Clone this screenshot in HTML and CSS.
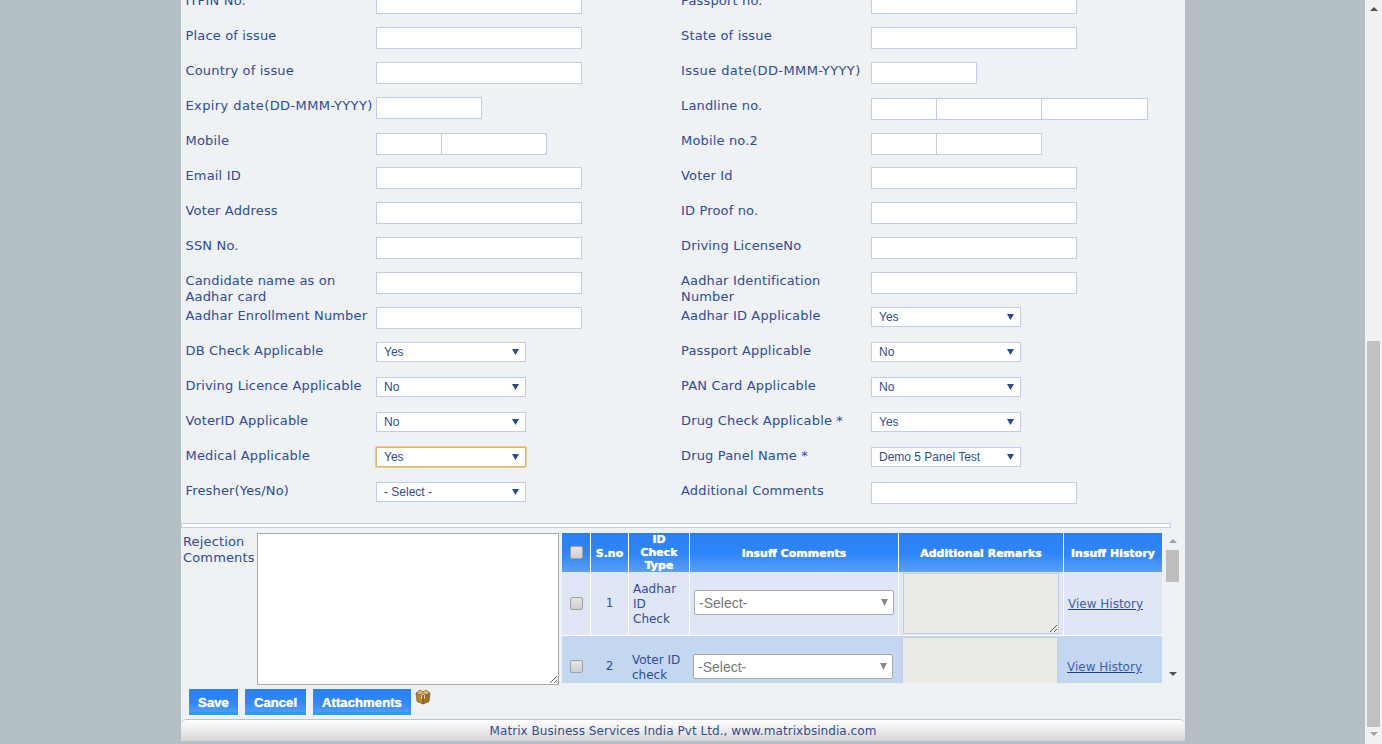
FILE: index.html
```html
<!DOCTYPE html>
<html lang="en">
<head>
  <meta charset="UTF-8">
  <title>Candidate Details</title>
  <link rel="stylesheet" href="styles.css">
</head>
<body>
  <div class="page">
    <div class="wrap">
      <form class="fields">
        <label>ITPIN No.</label><div><input class="txt"></div>
        <label>Passport no.</label><div><input class="txt"></div>

        <label>Place of issue</label><div><input class="txt"></div>
        <label>State of issue</label><div><input class="txt"></div>

        <label>Country of issue</label><div><input class="txt"></div>
        <label class="date-label">Issue date(DD-MMM-YYYY)</label><div><input class="txt date"></div>

        <label class="date-label">Expiry date(DD-MMM-YYYY)</label><div><input class="txt date"></div>
        <label>Landline no.</label>
        <div class="phone"><input class="txt code"><input class="txt num"><input class="txt ext"></div>

        <label>Mobile</label>
        <div class="phone"><input class="txt code"><input class="txt num"></div>
        <label>Mobile no.2</label>
        <div class="phone"><input class="txt code"><input class="txt num"></div>

        <label>Email ID</label><div><input class="txt"></div>
        <label>Voter Id</label><div><input class="txt"></div>

        <label>Voter Address</label><div><input class="txt"></div>
        <label>ID Proof no.</label><div><input class="txt"></div>

        <label>SSN No.</label><div><input class="txt"></div>
        <label>Driving LicenseNo</label><div><input class="txt"></div>

        <label>Candidate name as on Aadhar card</label><div><input class="txt"></div>
        <label>Aadhar Identification Number</label><div><input class="txt"></div>

        <label>Aadhar Enrollment Number</label><div><input class="txt"></div>
        <label>Aadhar ID Applicable</label>
        <div><select class="sel"><option>Yes</option></select></div>

        <label>DB Check Applicable</label>
        <div><select class="sel"><option>Yes</option></select></div>
        <label>Passport Applicable</label>
        <div><select class="sel"><option>No</option></select></div>

        <label>Driving Licence Applicable</label>
        <div><select class="sel"><option>No</option></select></div>
        <label>PAN Card Applicable</label>
        <div><select class="sel"><option>No</option></select></div>

        <label>VoterID Applicable</label>
        <div><select class="sel"><option>No</option></select></div>
        <label>Drug Check Applicable *</label>
        <div><select class="sel"><option>Yes</option></select></div>

        <label>Medical Applicable</label>
        <div><select class="sel focused"><option>Yes</option></select></div>
        <label>Drug Panel Name *</label>
        <div><select class="sel"><option>Demo 5 Panel Test</option></select></div>

        <label>Fresher(Yes/No)</label>
        <div><select class="sel"><option>- Select -</option></select></div>
        <label>Additional Comments</label><div><input class="txt"></div>
      </form>

      <div class="divider"></div>

      <div class="review">
        <label class="reject-label">Rejection Comments</label>
        <textarea class="reject-box"></textarea>

        <div class="grid-clip">
          <table class="grid">
            <colgroup>
              <col class="c-check"><col class="c-sno"><col class="c-type">
              <col class="c-comments"><col class="c-remarks"><col class="c-history">
            </colgroup>
            <thead>
              <tr>
                <th><input type="checkbox"></th>
                <th>S.no</th>
                <th class="th-type">ID Check Type</th>
                <th>Insuff Comments</th>
                <th>Additional Remarks</th>
                <th>Insuff History</th>
              </tr>
            </thead>
            <tbody>
              <tr class="odd">
                <td class="mid"><input type="checkbox"></td>
                <td class="mid">1</td>
                <td class="type">Aadhar ID Check</td>
                <td><select class="insuff"><option>-Select-</option></select></td>
                <td><textarea class="remarks"></textarea></td>
                <td class="link"><a href="#">View History</a></td>
              </tr>
              <tr class="even">
                <td class="mid"><input type="checkbox"></td>
                <td class="mid">2</td>
                <td class="type">Voter ID check</td>
                <td><select class="insuff"><option>-Select-</option></select></td>
                <td><textarea class="remarks"></textarea></td>
                <td class="link"><a href="#">View History</a></td>
              </tr>
            </tbody>
          </table>
        </div>

        <div class="grid-scroll">
          <span class="arrow up small"></span>
          <span class="grid-thumb"></span>
          <span class="arrow down small dark"></span>
        </div>
      </div>

      <div class="actions">
        <button type="button" class="btn btn-save">Save</button>
        <button type="button" class="btn btn-cancel">Cancel</button>
        <button type="button" class="btn btn-attach">Attachments</button>
        <svg class="box" width="16" height="16" viewBox="0 0 16 16">
          <path d="M1 4 L8 6.5 V15 L2 12.5 Z" fill="#b8843c" stroke="#7d5520" stroke-width=".7"/>
          <path d="M15 4 L8 6.5 V15 L14 12.5 Z" fill="#a06f2c" stroke="#7d5520" stroke-width=".7"/>
          <path d="M1 4 L5 1 L8 3 L11 1 L15 4 L11 6 L8 4.5 L5 6 Z" fill="#e0b56e" stroke="#7d5520" stroke-width=".7"/>
          <path d="M6.5 6 V10 M9.5 6 V10" stroke="#ecd09a" stroke-width="1"/>
        </svg>
      </div>

      <footer class="foot">Matrix Business Services India Pvt Ltd., www.matrixbsindia.com</footer>
    </div>
  </div>

  <div class="page-scroll">
    <span class="arrow up"></span>
    <span class="page-thumb"></span>
    <span class="arrow down"></span>
  </div>
</body>
</html>
```

FILE: styles.css
```css
html, body {
  margin: 0;
  padding: 0;
  height: 744px;
  overflow: hidden;
}
body {
  display: flex;
  background: #b3bfc5;
  font-family: "DejaVu Sans", Verdana, sans-serif;
  color: #2f4b9b;
}

.page {
  flex: 1;
  height: 744px;
  overflow: hidden;
}
.wrap {
  width: 1004px;
  margin-left: 181px;
  background: #eef2f5;
  display: flex;
  flex-direction: column;
  height: 741px;
}

/* form fields - page is scrolled, so first row is cut off */
.fields {
  margin: -8px 0 6px;
  padding-left: 4px;
  display: grid;
  grid-template-columns: 191px 304.5px 190.5px 1fr;
  grid-auto-rows: 35px;
  height: 525px;
  flex: none;
  box-sizing: border-box;
}
.fields label {
  font-size: 13px;
  line-height: 16px;
  padding: 1px 0 0 .5px;
  letter-spacing: .16px;
}
.fields label.date-label { letter-spacing: .4px; }
.fields > div {
  display: flex;
  align-items: flex-start;
}
.txt {
  width: 206px;
  height: 22px;
  box-sizing: border-box;
  border: 1px solid #c3cee5;
  background: #fff;
  padding: 0 4px;
  margin: 0;
  outline: none;
  flex: none;
}
.date { width: 106px; }
.phone { padding-top: 1px; }
.code { width: 66px; }
.num { width: 106px; margin-left: -1px; }
.ext { width: 107px; margin-left: -1px; }

.sel {
  appearance: none;
  width: 150px;
  height: 20px;
  box-sizing: border-box;
  border: 1px solid #c3cee5;
  border-radius: 0;
  padding: 0 0 0 7px;
  outline: none;
  font: 12px "Liberation Sans", Arial, sans-serif;
  color: #2f4b9b;
  background: #fff url("data:image/svg+xml,%3Csvg xmlns='http://www.w3.org/2000/svg' width='7' height='6'%3E%3Cpath d='M0 0H7L3.5 6Z' fill='%23264a9a'/%3E%3C/svg%3E") no-repeat right 6px center;
}
.focused {
  border: 1px solid #e3b566;
  box-shadow: 0 0 0 1px #ecc98e;
  border-radius: 1px;
}

.divider {
  width: 990px;
  height: 5px;
  box-sizing: border-box;
  border: 1px solid #c3cee5;
  background: #fff;
  flex: none;
}

/* rejection comments + insuff grid */
.review {
  display: flex;
  align-items: flex-start;
  margin-top: 5px;
  padding-left: 2px;
  height: 152px;
  flex: none;
}
.reject-label {
  width: 74px;
  font-size: 13px;
  line-height: 16px;
  padding-top: 1px;
  letter-spacing: .15px;
  flex: none;
}
.reject-box {
  width: 302px;
  height: 152px;
  box-sizing: border-box;
  border: 1px solid #a9a9a9;
  margin: 0 3px 0 0;
  padding: 2px;
  flex: none;
  background: #fff;
}
.grid-clip {
  width: 600px;
  height: 150px;
  overflow: hidden;
  flex: none;
}
.grid {
  width: 600px;
  table-layout: fixed;
  border-collapse: separate;
  border-spacing: 0;
  font-size: 12px;
  line-height: 15px;
}
.c-check { width: 29px; }
.c-sno { width: 38px; }
.c-type { width: 61px; }
.c-comments { width: 209px; }
.c-remarks { width: 165px; }
.c-history { width: 98px; }

.grid th {
  height: 39px;
  box-sizing: border-box;
  padding: 1px 1px 0;
  background: linear-gradient(#2a80f6, #2f86f6 55%, #5ba0f8);
  color: #fff;
  font-size: 11px;
  line-height: 13px;
  font-weight: bold;
  text-shadow: 0 0 1px #fff;
  text-align: center;
  border-right: 1px solid #fff;
}
.grid th:last-child { border-right: none; }
.grid th.th-type { padding: 0 10px; }
.grid input[type=checkbox] {
  appearance: none;
  box-sizing: border-box;
  margin: 0;
  width: 13px;
  height: 13px;
  vertical-align: middle;
  border: 1px solid #a0a0a0;
  border-radius: 2px;
  background: linear-gradient(#e4e4e4, #cfcfcf);
}
.grid th input[type=checkbox] { margin-top: -2px; }
.grid td {
  padding: 0;
  vertical-align: middle;
}
.mid { text-align: center; }
.odd td {
  background: #dfe7f6;
  height: 64px;
  border-right: 1px solid #fff;
  padding-left: 4px;
  box-sizing: border-box;
  border-bottom: 1px solid #fff;
}
.odd td.mid { padding-left: 0; }
.odd td.type { padding-right: 6px; }
.odd td:last-child { border-right: none; }
.even td {
  background: #c4d7f1;
  height: 61px;
  padding-left: 3px;
}
.even td.mid { padding-left: 0; padding-right: 1px; }
.odd td.type, .odd td.link { padding-top: 2px; }
.even td.mid { padding-bottom: 2px; }

.insuff {
  appearance: none;
  display: block;
  width: 200px;
  height: 25px;
  box-sizing: border-box;
  border: 1px solid #a9a9a9;
  border-radius: 2px;
  padding: 0 0 0 4px;
  margin-top: -2px;
  font: 14px "Liberation Sans", Arial, sans-serif;
  color: #777;
  background: #fff url("data:image/svg+xml,%3Csvg xmlns='http://www.w3.org/2000/svg' width='7' height='7'%3E%3Cpath d='M0 0H7L3.5 7Z' fill='%23888'/%3E%3C/svg%3E") no-repeat right 5px center;
}
.remarks {
  display: block;
  width: 156px;
  height: 61px;
  box-sizing: border-box;
  border: 1px solid #c3cee5;
  background: #ebeae4;
  margin: 0;
  padding: 2px;
}
.grid a {
  color: #4060ad;
  text-decoration: underline;
  text-decoration-color: #1f3f96;
  font-size: 12px;
}

.grid-scroll {
  width: 21px;
  height: 150px;
  display: flex;
  flex-direction: column;
  align-items: center;
  padding-top: 6px;
  box-sizing: border-box;
  flex: none;
}
.grid-thumb {
  width: 13px;
  height: 32px;
  background: #bdbdbd;
  margin: 7px 0 90px;
}

.arrow {
  display: block;
  width: 0;
  height: 0;
  border-left: 4px solid transparent;
  border-right: 4px solid transparent;
  flex: none;
}
.arrow.up { border-bottom: 4px solid #505050; }
.arrow.down { border-top: 4px solid #a3a3a3; }
.arrow.up.small { border-bottom-color: #a3a3a3; }
.arrow.down.dark { border-top-color: #505050; }

.actions {
  display: flex;
  align-items: flex-start;
  gap: 7px;
  margin-top: 4px;
  padding-left: 8px;
  height: 26px;
  flex: none;
}
.btn {
  height: 26px;
  padding: 0;
  border: none;
  border-radius: 0;
  color: #fff;
  font: bold 13.2px "Liberation Sans", Arial, sans-serif;
  text-shadow: 0 0 1px #fff;
  background: linear-gradient(#2a80f6 0, #2f86f6 50%, #4f9bf8 88%, #28a0f0 88%, #28a0f0 100%);
}
.btn-save { width: 49px; }
.btn-cancel { width: 61px; }
.btn-attach { width: 98px; }
.box { margin: 0 0 0 -3px; }

.foot {
  margin-top: 4px;
  height: 22px;
  box-sizing: border-box;
  border-top: 1px solid #b9c4cc;
  border-radius: 6px 6px 0 0;
  background: linear-gradient(#fff, #d6d6d6);
  text-align: center;
  font-size: 12px;
  line-height: 22px;
  letter-spacing: .06px;
  flex: none;
}

/* browser scrollbar of the page */
.page-scroll {
  width: 17px;
  height: 744px;
  flex: none;
  background: #f1f1f1;
  display: flex;
  flex-direction: column;
  align-items: center;
  padding-top: 7px;
  box-sizing: border-box;
}
.page-thumb {
  width: 13px;
  height: 386px;
  background: #c1c1c1;
  margin: 330px 0 5px;
  flex: none;
}
```
